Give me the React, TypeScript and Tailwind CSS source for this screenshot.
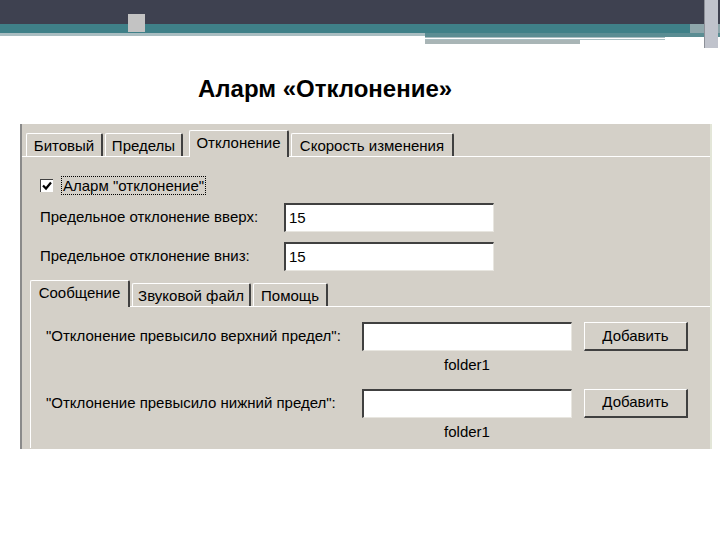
import React from 'react';

const font = { fontFamily: '"Liberation Sans", Arial, sans-serif' };

const Tab = ({ label, active, w }: { label: string; active?: boolean; w: string }) => (
  <div
    className={`${w} flex items-center justify-center border-l border-t border-white border-r-2 border-r-[#404040] rounded-t-[2px] ${
      active ? 'h-[27px] -mb-[1px] bg-[#d4d0c8] z-10 pb-[3px]' : 'h-[23px] bg-[#d4d0c8]'
    }`}
  >
    <span className="text-[15px] text-black leading-none">{label}</span>
  </div>
);

const Sunken = ({ value, w }: { value?: string; w: string }) => (
  <div className={`${w} h-[29px] bg-white border-t-2 border-l-2 border-t-[#404040] border-l-[#404040] border-b border-r border-b-[#e8e6e0] border-r-[#e8e6e0] flex items-center px-[3px] text-[15px]`}>
    {value}
  </div>
);

const Button = ({ label }: { label: string }) => (
  <div className="w-[104px] h-[29px] bg-[#d4d0c8] border-t border-l border-white border-r-2 border-b-2 border-r-[#404040] border-b-[#404040] flex items-center justify-center text-[15px]">
    {label}
  </div>
);

const MsgRow = ({ label }: { label: string }) => (
  <div className="flex flex-col">
    <div className="flex items-center">
      <span className="w-[316px] text-[15px]">{label}</span>
      <Sunken w="w-[210px]" />
      <div className="ml-[12px]">
        <Button label="Добавить" />
      </div>
    </div>
    <div className="ml-[316px] w-[210px] text-center text-[15px] mt-[3px]">folder1</div>
  </div>
);

export default function App() {
  return (
    <div className="w-[720px] h-[540px] bg-white relative overflow-hidden text-black" style={font}>
      {/* header bar */}
      <div className="h-[24px] bg-[#3e4150]" />
      <div className="h-[9px] bg-[#3f8088] flex justify-end">
        <div className="w-[30px] bg-[#8ea6ab]" />
      </div>
      <div className="flex">
        <div className="w-[425px] h-[3px] bg-[#a9bdc1]" />
        <div className="flex-1 flex flex-col">
          <div className="h-[4px] bg-[#5b8d93]" />
          <div className="w-[240px] h-[3px] bg-white border-y border-[#a9bdc1]" />
          <div className="w-[155px] h-[4px] bg-[#a9b5b6]" />
        </div>
      </div>
      <div className="absolute left-[128px] top-[14px] w-[17px] h-[18px] bg-[#c3c3c3]" />
      <div className="absolute right-[2px] top-0 w-[14px] h-[48px] bg-[#c0c3cc] border-l border-[#8d9098]" />

      {/* title */}
      <div className="mt-[33px] pl-[198px] text-[24px] font-bold leading-none">Аларм «Отклонение»</div>

      {/* dialog panel */}
      <div className="mt-[23px] ml-[20px] w-[692px] h-[325px] bg-[#d4d0c8] border-l-2 border-l-[#8a8a8a] border-r-2 border-r-[#e3e6d8] pt-[6px]">
        <div className="flex items-end pl-[4px] gap-[2px]">
          <Tab label="Битовый" w="w-[77px]" />
          <Tab label="Пределы" w="w-[78px]" />
          <div className="w-[2px]" />
          <Tab label="Отклонение" w="w-[100px]" active />
          <Tab label="Скорость изменения" w="w-[163px]" />
        </div>
        <div className="border-t border-white h-[292px] flex flex-col">
          <div className="pl-[18px] pt-[19px] flex items-center">
            <div className="w-[13px] h-[13px] bg-white border-t border-l border-[#404040] flex items-center justify-center">
              <svg width="10" height="10" viewBox="0 0 10 10">
                <path d="M1 4.5 L4 7.5 L9 1.5" stroke="#000" strokeWidth="2.2" fill="none" />
              </svg>
            </div>
            <span className="ml-[8px] px-[1px] border border-dotted border-black text-[15px] leading-[17px]">
              Аларм "отклонение"
            </span>
          </div>
          <div className="pl-[18px] mt-[8px] flex items-center">
            <span className="w-[244px] text-[15px]">Предельное отклонение вверх:</span>
            <Sunken w="w-[210px]" value="15" />
          </div>
          <div className="pl-[18px] mt-[10px] flex items-center">
            <span className="w-[244px] text-[15px]">Предельное отклонение вниз:</span>
            <Sunken w="w-[210px]" value="15" />
          </div>

          {/* inner tabs */}
          <div className="mt-[9px] ml-[8px] flex items-end gap-[2px]">
            <Tab label="Сообщение" w="w-[100px]" active />
            <Tab label="Звуковой файл" w="w-[119px]" />
            <Tab label="Помощь" w="w-[75px]" />
          </div>
          <div className="ml-[8px] flex-1 border-t border-l border-white pl-[15px] pt-[15px] flex flex-col gap-[12px]">
            <MsgRow label={'"Отклонение превысило верхний предел":'} />
            <MsgRow label={'"Отклонение превысило нижний предел":'} />
          </div>
        </div>
      </div>
    </div>
  );
}
